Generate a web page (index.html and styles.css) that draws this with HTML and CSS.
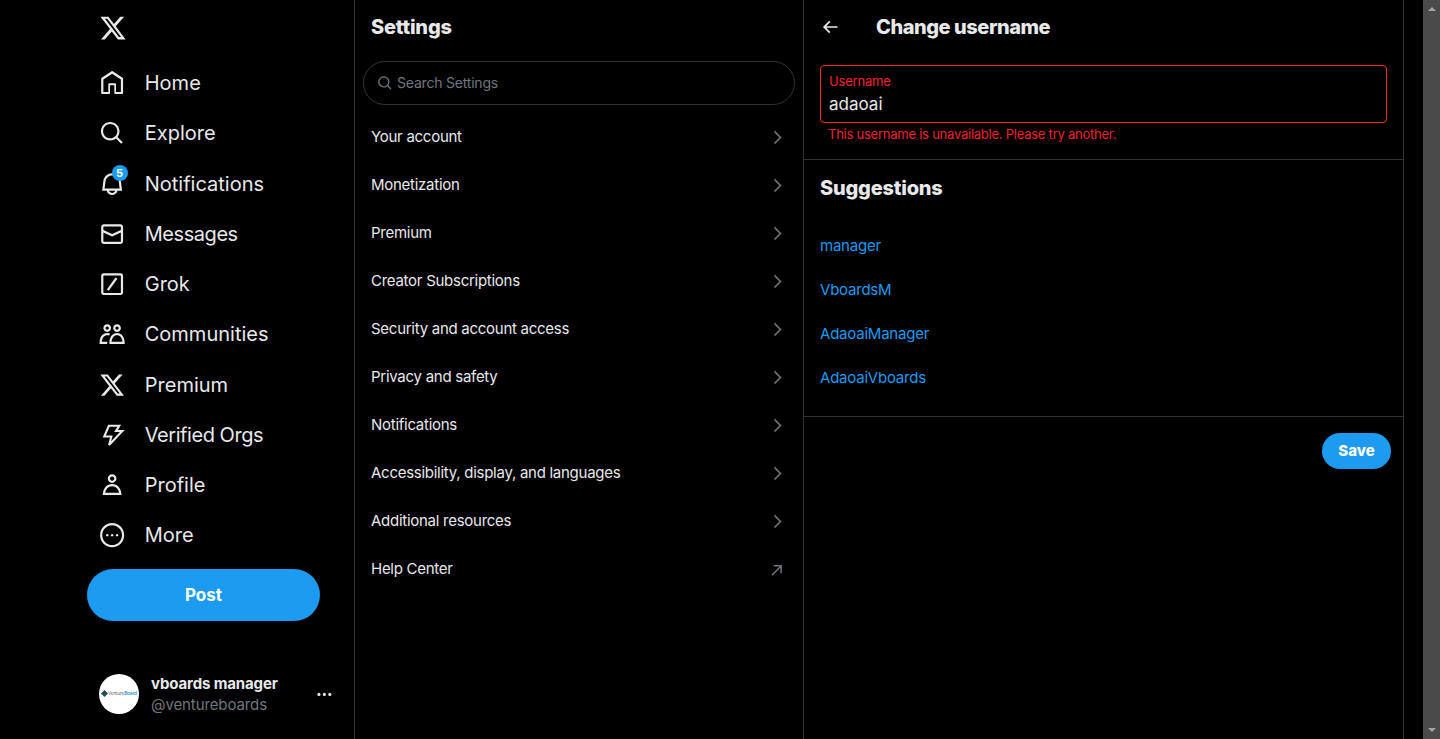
FILE: index.html
```html
<!DOCTYPE html>
<html lang="en">
<head>
<meta charset="utf-8">
<title>Change username</title>
<link rel="stylesheet" href="styles.css">
</head>
<body>
<div class="app">
  <aside class="sidebar">
    <div class="logo"><svg viewBox="0 0 24 24" class="logo-icon"><path d="M18.244 2.25h3.308l-7.227 8.26 8.502 11.24H16.17l-5.214-6.817L4.99 21.75H1.68l7.73-8.835L1.254 2.25H8.08l4.713 6.231zm-1.161 17.52h1.833L7.084 4.126H5.117z"/></svg></div>
    <nav class="nav">
      <a class="nav-item"><span class="nav-icon"><svg viewBox="0 0 24 24"><path d="M21.591 7.146L12.52 1.157c-.316-.21-.724-.21-1.04 0l-9.071 5.99c-.26.173-.409.456-.409.757v13.183c0 .502.418.913.929.913H9.14c.51 0 .929-.41.929-.913v-7.075h3.909v7.075c0 .502.417.913.928.913h6.165c.511 0 .929-.41.929-.913V7.904c0-.301-.158-.584-.408-.758zM20 20l-4.5.01.011-7.097c0-.502-.418-.913-.928-.913H9.44c-.511 0-.929.41-.929.913L8.5 20H4V8.773l8.011-5.342L20 8.764z"/></svg></span>Home</a>
      <a class="nav-item"><span class="nav-icon"><svg viewBox="0 0 24 24"><path d="M10.25 3.75c-3.59 0-6.5 2.91-6.5 6.5s2.91 6.5 6.5 6.5c1.795 0 3.419-.726 4.596-1.904 1.178-1.177 1.904-2.801 1.904-4.596 0-3.59-2.91-6.5-6.5-6.5zm-8.5 6.5c0-4.694 3.806-8.5 8.5-8.5s8.5 3.806 8.5 8.5c0 1.986-.682 3.815-1.824 5.262l4.781 4.781-1.414 1.414-4.781-4.781c-1.447 1.142-3.276 1.824-5.262 1.824-4.694 0-8.5-3.806-8.5-8.5z"/></svg></span>Explore</a>
      <a class="nav-item"><span class="nav-icon"><svg viewBox="0 0 24 24"><path d="M19.993 9.042C19.48 5.017 16.054 2 11.996 2s-7.49 3.021-7.999 7.051L2.866 18H7.1c.463 2.282 2.481 4 4.9 4s4.437-1.718 4.9-4h4.236l-1.143-8.958zM12 20c-1.306 0-2.417-.835-2.829-2h5.658c-.412 1.165-1.523 2-2.829 2zm-6.866-4l.847-6.698C6.364 6.272 8.941 4 11.996 4s5.627 2.268 6.013 5.295L18.864 16H5.134z"/></svg><span class="badge">5</span></span>Notifications</a>
      <a class="nav-item"><span class="nav-icon"><svg viewBox="0 0 24 24"><path d="M1.998 5.5c0-1.381 1.119-2.5 2.5-2.5h15c1.381 0 2.5 1.119 2.5 2.5v13c0 1.381-1.119 2.5-2.5 2.5h-15c-1.381 0-2.5-1.119-2.5-2.5v-13zm2.5-.5c-.276 0-.5.224-.5.5v2.764l8 3.638 8-3.636V5.5c0-.276-.224-.5-.5-.5h-15zm15.5 5.463l-8 3.636-8-3.638V18.5c0 .276.224.5.5.5h15c.276 0 .5-.224.5-.5v-8.037z"/></svg></span><span class="nav-tight">Messages</span></a>
      <a class="nav-item"><span class="nav-icon"><svg viewBox="0 0 24 24"><path d="M4.5 2h15A2.5 2.5 0 0 1 22 4.500v15a2.500 2.500 0 0 1-2.500 2.500h-15A2.500 2.500 0 0 1 2 19.500v-15A2.500 2.500 0 0 1 4.500 2zm0 2a.5.5 0 0 0-.5.500v15a.5.5 0 0 0 .5.500h15a.5.5 0 0 0 .5-.500v-15a.5.5 0 0 0-.5-.500h-15zM15.100 6l1.700 1-7.900 11-1.700-1z"/></svg></span>Grok</a>
      <a class="nav-item"><span class="nav-icon"><svg viewBox="0 0 24 24"><path d="M7.501 19.917L7.471 21H.472l.029-1.027c.184-6.618 3.736-8.977 7-8.977.963 0 1.95.212 2.87.672-.444.478-.851 1.03-1.212 1.656-.507-.204-1.054-.329-1.658-.329-2.767 0-4.57 2.223-4.938 6.004H7.56c-.023.302-.05.599-.059.917zm15.998.056L23.528 21H9.472l.029-1.027c.184-6.618 3.736-8.977 7-8.977s6.816 2.358 7 8.977zM21.437 19c-.367-3.781-2.17-6.004-4.938-6.004s-4.57 2.223-4.938 6.004h9.875zm-4.938-9c-.799 0-1.527-.279-2.116-.73-.836-.64-1.384-1.638-1.384-2.77 0-1.93 1.567-3.5 3.5-3.5s3.5 1.57 3.5 3.5c0 1.132-.548 2.13-1.384 2.77-.589.451-1.317.73-2.116.73zm-1.5-3.5c0 .827.673 1.5 1.5 1.5s1.5-.673 1.5-1.5-.673-1.5-1.5-1.5-1.5.673-1.5 1.500zM7.500 3C9.433 3 11 4.570 11 6.500S9.433 10 7.500 10 4 8.430 4 6.500 5.567 3 7.500 3zm0 2C6.673 5 6 5.673 6 6.500S6.673 8 7.500 8 9 7.327 9 6.500 8.327 5 7.500 5z"/></svg></span>Communities</a>
      <a class="nav-item"><span class="nav-icon"><svg viewBox="0 0 24 24"><path d="M18.244 2.25h3.308l-7.227 8.26 8.502 11.24H16.17l-5.214-6.817L4.99 21.75H1.68l7.73-8.835L1.254 2.25H8.08l4.713 6.231zm-1.161 17.52h1.833L7.084 4.126H5.117z"/></svg></span>Premium</a>
      <a class="nav-item"><span class="nav-icon"><svg class="icon-stroke" viewBox="0 0 24 24"><path d="M9 3.500H18.500L15.500 8.300H21.300L9.200 21L11.300 13.300H4.800Z"/></svg></span><span class="nav-tight">Verified Orgs</span></a>
      <a class="nav-item"><span class="nav-icon"><svg viewBox="0 0 24 24"><path d="M5.651 19h12.698c-.337-1.8-1.023-3.21-1.945-4.19C15.318 13.65 13.838 13 12 13s-3.317.65-4.404 1.81c-.922.98-1.608 2.39-1.945 4.19zm.486-5.56C7.627 11.85 9.648 11 12 11s4.373.85 5.863 2.44c1.477 1.58 2.366 3.8 2.632 6.46l.11 1.1H3.395l.11-1.1c.266-2.66 1.155-4.88 2.632-6.46zM12 4c-1.105 0-2 .9-2 2s.895 2 2 2 2-.9 2-2-.895-2-2-2zM8 6c0-2.21 1.791-4 4-4s4 1.79 4 4-1.791 4-4 4-4-1.790-4-4z"/></svg></span>Profile</a>
      <a class="nav-item"><span class="nav-icon"><svg viewBox="0 0 24 24"><path d="M3 12c0-4.970 4.030-9 9-9s9 4.030 9 9-4.030 9-9 9-9-4.030-9-9zm9-11C5.925 1 1 5.925 1 12s4.925 11 11 11 11-4.925 11-11S18.075 1 12 1z"/><circle cx="7.500" cy="12" r="1.100"/><circle cx="12" cy="12" r="1.100"/><circle cx="16.500" cy="12" r="1.100"/></svg></span>More</a>
    </nav>
    <button class="post-btn">Post</button>
    <div class="account">
      <div class="avatar"><span class="avatar-mark"></span><span class="avatar-text">Venture<b>Board</b></span></div>
      <div class="account-names">
        <div class="account-name">vboards manager</div>
        <div class="account-handle">@ventureboards</div>
      </div>
      <svg class="account-more" viewBox="0 0 24 24"><circle cx="5" cy="12" r="2"/><circle cx="12" cy="12" r="2"/><circle cx="19" cy="12" r="2"/></svg>
    </div>
  </aside>

  <section class="settings">
    <h2 class="col-title">Settings</h2>
    <div class="search">
      <svg viewBox="0 0 24 24"><path d="M10.250 3.750c-3.590 0-6.500 2.910-6.500 6.500s2.910 6.500 6.500 6.500c1.795 0 3.419-.726 4.596-1.904 1.178-1.177 1.904-2.801 1.904-4.596 0-3.590-2.910-6.500-6.500-6.500zm-8.500 6.500c0-4.694 3.806-8.500 8.500-8.500s8.500 3.806 8.500 8.500c0 1.986-.682 3.815-1.824 5.262l4.781 4.781-1.414 1.414-4.781-4.781c-1.447 1.142-3.276 1.824-5.262 1.824-4.694 0-8.500-3.806-8.500-8.500z"/></svg>
      <span class="search-text">Search Settings</span>
    </div>
    <ul class="menu">
      <li class="menu-item">Your account<svg viewBox="0 0 24 24"><path d="M14.586 12L7.543 4.960l1.414-1.420L17.414 12l-8.457 8.460-1.414-1.420L14.586 12z"/></svg></li>
      <li class="menu-item">Monetization<svg viewBox="0 0 24 24"><path d="M14.586 12L7.543 4.960l1.414-1.420L17.414 12l-8.457 8.460-1.414-1.420L14.586 12z"/></svg></li>
      <li class="menu-item">Premium<svg viewBox="0 0 24 24"><path d="M14.586 12L7.543 4.960l1.414-1.420L17.414 12l-8.457 8.460-1.414-1.420L14.586 12z"/></svg></li>
      <li class="menu-item">Creator Subscriptions<svg viewBox="0 0 24 24"><path d="M14.586 12L7.543 4.960l1.414-1.420L17.414 12l-8.457 8.460-1.414-1.420L14.586 12z"/></svg></li>
      <li class="menu-item">Security and account access<svg viewBox="0 0 24 24"><path d="M14.586 12L7.543 4.960l1.414-1.420L17.414 12l-8.457 8.460-1.414-1.420L14.586 12z"/></svg></li>
      <li class="menu-item">Privacy and safety<svg viewBox="0 0 24 24"><path d="M14.586 12L7.543 4.960l1.414-1.420L17.414 12l-8.457 8.460-1.414-1.420L14.586 12z"/></svg></li>
      <li class="menu-item">Notifications<svg viewBox="0 0 24 24"><path d="M14.586 12L7.543 4.960l1.414-1.420L17.414 12l-8.457 8.460-1.414-1.420L14.586 12z"/></svg></li>
      <li class="menu-item">Accessibility, display, and languages<svg viewBox="0 0 24 24"><path d="M14.586 12L7.543 4.960l1.414-1.420L17.414 12l-8.457 8.460-1.414-1.420L14.586 12z"/></svg></li>
      <li class="menu-item">Additional resources<svg viewBox="0 0 24 24"><path d="M14.586 12L7.543 4.960l1.414-1.420L17.414 12l-8.457 8.460-1.414-1.420L14.586 12z"/></svg></li>
      <li class="menu-item">Help Center<svg class="icon-stroke" viewBox="0 0 24 24"><path d="M5 19.500L16.500 8M7.500 7.500H16.800V16.800"/></svg></li>
    </ul>
  </section>

  <main class="detail">
    <header class="detail-head">
      <svg viewBox="0 0 24 24"><path d="M7.414 13l5.043 5.040-1.414 1.420L3.586 12l7.457-7.460 1.414 1.420L7.414 11H21v2H7.414z"/></svg>
      <h2 class="col-title detail-title">Change username</h2>
    </header>
    <div class="form">
      <label class="field">
        <span class="field-label">Username</span>
        <span class="field-value">adaoai</span>
      </label>
      <p class="field-error">This username is unavailable. Please try another.</p>
    </div>
    <section class="suggestions">
      <h3 class="col-title sugg-title">Suggestions</h3>
      <a class="sugg-link">manager</a>
      <a class="sugg-link">VboardsM</a>
      <a class="sugg-link">AdaoaiManager</a>
      <a class="sugg-link">AdaoaiVboards</a>
    </section>
    <div class="actions"><button class="save-btn">Save</button></div>
  </main>

  <div class="gutter"></div>
  <div class="scrollbar"><span class="arrow-up"></span><span class="arrow-down"></span></div>
</div>
</body>
</html>
```

FILE: styles.css
```css
* { box-sizing: border-box; }
html, body { margin: 0; padding: 0; height: 739px; overflow: hidden; background: #000; }
body { font-family: Inter, "Liberation Sans", sans-serif; color: #e7e9ea; }
h2, h3, p, ul { margin: 0; padding: 0; }
svg { fill: currentColor; display: block; }
svg.icon-stroke { fill: none; stroke: currentColor; stroke-width: 1.9; }

.app { display: flex; height: 739px; }

.sidebar { width: 355px; flex: none; border-right: 1px solid #2f3336; padding-left: 87px; display: flex; flex-direction: column; }
.logo { height: 58px; padding: 14px 0 0 12px; }
.logo-icon { width: 28px; height: 28px; }
.nav { display: flex; flex-direction: column; }
.nav-item { height: 50.25px; display: flex; align-items: center; gap: 20px; padding-left: 11.5px; font-size: 20px; }
.nav-tight { letter-spacing: -.45px; }
.nav-icon { position: relative; width: 26.25px; height: 26.25px; flex: none; }
.nav-icon svg { width: 26.25px; height: 26.25px; }
.badge { position: absolute; top: -6px; left: 13px; width: 16px; height: 16px; border-radius: 50%; background: #1d9bf0; color: #fff; font-size: 11px; font-weight: 700; line-height: 16px; text-align: center; }
.post-btn { margin-top: 8px; width: 233px; height: 52px; border: 0; border-radius: 26px; background: #1d9bf0; color: #fff; font: 700 17px Inter, sans-serif; }
.account { margin-top: 53px; display: flex; align-items: center; padding-left: 12px; width: 247px; height: 40px; }
.avatar { position: relative; width: 40px; height: 40px; border-radius: 50%; background: #fff; flex: none; display: flex; align-items: center; padding-left: 3px; gap: 1px; }
.avatar-mark { width: 5px; height: 5px; background: #264a5c; transform: rotate(45deg); flex: none; }
.avatar-text { font-size: 4.600px; letter-spacing: -.1px; color: #666; white-space: nowrap; }
.avatar-text b { color: #2a8fc9; font-weight: 600; }
.account-names { margin: 2px 0 0 12px; flex: 1; }
.account-name { font-size: 15px; font-weight: 700; line-height: 20px; letter-spacing: -.13px; }
.account-handle { font-size: 15px; color: #71767b; line-height: 20px; margin-top: 1px; letter-spacing: -.1px; }
.account-more { width: 18.750px; height: 18.750px; flex: none; margin-top: 2px; }

.settings { width: 449px; flex: none; border-right: 1px solid #2f3336; }
.col-title { font-size: 20px; font-weight: 800; line-height: 24px; letter-spacing: -.2px; }
.settings > .col-title { padding: 15px 16px 0; height: 61px; }
.search { margin: 0 8px; height: 44px; border: 1px solid #2f3336; border-radius: 22px; display: flex; align-items: center; gap: 4px; padding-left: 13px; color: #71767b; font-size: 14px; }
.search svg { width: 16px; height: 16px; }
.search-text { letter-spacing: -.2px; padding-bottom: 2px; }
.menu { list-style: none; margin-top: 8px; }
.menu-item { height: 48px; display: flex; align-items: center; justify-content: space-between; padding: 0 16px 2px; font-size: 15px; letter-spacing: -.27px; }
.menu-item svg { width: 18.750px; height: 18.750px; color: #71767b; margin-top: 2px; }

.detail { width: 600px; flex: none; border-right: 1px solid #2f3336; }
.detail-head { height: 53px; display: flex; align-items: center; padding: 1px 0 0 16px; gap: 36px; }
.detail-head svg { width: 20px; height: 20px; }
.detail-title { letter-spacing: -.45px; margin-top: -1px; }
.form { padding: 12px 16px 0; height: 107px; border-bottom: 1px solid #2f3336; }
.field { display: block; height: 58px; border: 1px solid #f4212e; border-radius: 4px; padding: 7px 8px 0; }
.field-label { display: block; color: #f4212e; font-size: 13px; line-height: 16px; letter-spacing: -.2px; }
.field-value { display: block; font-size: 17px; line-height: 24px; margin-top: 3px; }
.field-error { color: #f4212e; font-size: 13px; line-height: 16px; padding: 3px 8px 0; letter-spacing: -.24px; }
.suggestions { height: 257px; padding: 16px 16px 0; border-bottom: 1px solid #2f3336; }
.sugg-title { height: 48px; }
.sugg-link { display: block; height: 44px; line-height: 44px; color: #1d9bf0; font-size: 15px; letter-spacing: -.22px; }
.actions { display: flex; justify-content: flex-end; padding: 16px 12px 0; }
.save-btn { width: 69px; height: 36px; border: 0; border-radius: 18px; background: #1d9bf0; color: #fff; font: 800 15px Inter, sans-serif; padding-bottom: 2px; }

.gutter { flex: 1; }
.scrollbar { width: 17px; flex: none; background: #4a4a4a; position: relative; display: flex; flex-direction: column; justify-content: space-between; align-items: center; padding: 7px 0; }
.arrow-up { width: 0; height: 0; border-left: 4px solid transparent; border-right: 4px solid transparent; border-bottom: 4px solid #a3a3a3; }
.arrow-down { width: 0; height: 0; border-left: 4px solid transparent; border-right: 4px solid transparent; border-top: 4px solid #a3a3a3; }
```
